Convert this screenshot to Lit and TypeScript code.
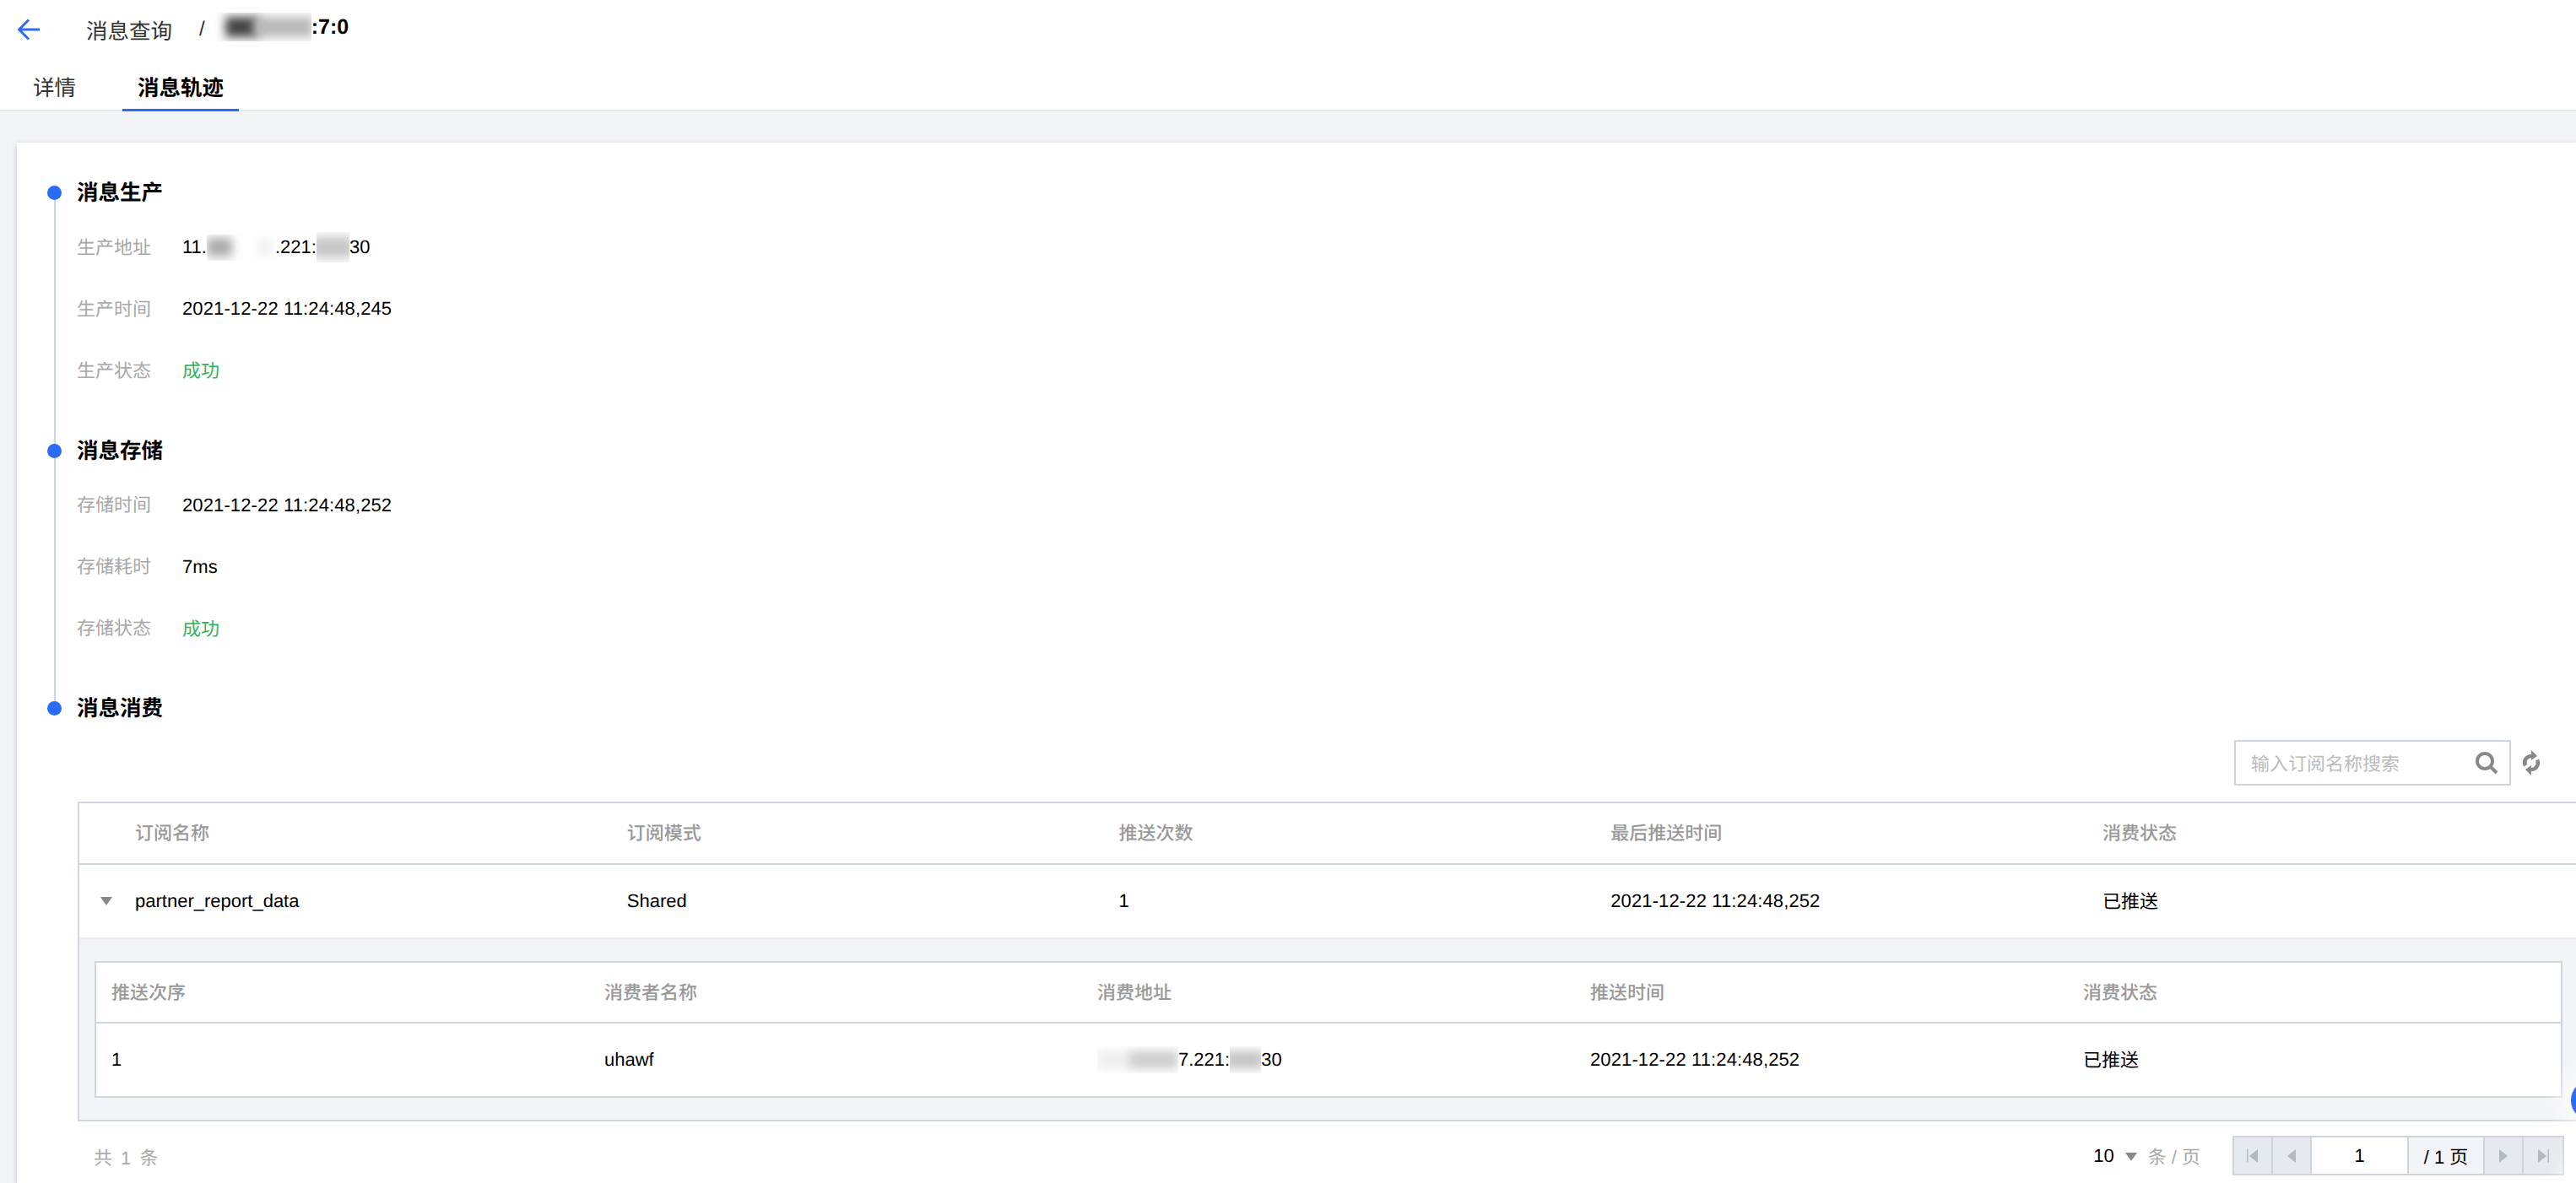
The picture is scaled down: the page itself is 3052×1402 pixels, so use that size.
import { LitElement, html, css, svg } from 'lit';
import { customElement } from 'lit/decorators.js';

type Blob = [left: number, width: number, color: string];

const HEAD_COLS = ['订阅名称', '订阅模式', '推送次数', '最后推送时间', '消费状态'];
const SUB_COLS = ['推送次序', '消费者名称', '消费地址', '推送时间', '消费状态'];

// redaction: soft grey blobs clipped to a white box
function redact(width: number, height: number, blobs: Blob[]) {
  return html`<span class="redact" style="width:${width}px;height:${height}px">
    ${blobs.map(([left, w, color]) => html`<i style="left:${left}px;width:${w}px;background:${color}"></i>`)}
  </span>`;
}

const caret = html`<svg class="caret" viewBox="0 0 14 10" width="14" height="10"><path d="M0 0H14L7 10Z" fill="#888"></path></svg>`;

function pagerIcon(kind: 'first' | 'prev' | 'next' | 'last') {
  const shapes = {
    first: svg`<path d="M1 1h1.5v16H1zM14 1v16L4 9z"></path>`,
    prev: svg`<path d="M13 1v16L3 9z"></path>`,
    next: svg`<path d="M3 1v16l10-8z"></path>`,
    last: svg`<path d="M13.5 1H15v16h-1.5zM2 1v16l10-8z"></path>`,
  };
  return html`<svg viewBox="0 0 16 18" width="16" height="18" fill="#b4b8bf">${shapes[kind]}</svg>`;
}

@customElement('app-root')
export class AppRoot extends LitElement {
  static styles = css`
    :host {
      display: block;
      height: 1402px;
      overflow: hidden;
      position: relative;
      background: #f2f4f8;
      color: #000;
      font-family: "Liberation Sans", "Noto Sans CJK SC", sans-serif;
      font-size: 22px;
      text-rendering: geometricPrecision;
    }

    .header {
      height: 132px;
      box-sizing: border-box;
      background: #fff;
      border-bottom: 2px solid #e6e9ef;
    }

    .crumbs {
      height: 70px;
      display: flex;
      align-items: center;
      padding-left: 21px;
    }

    .crumb-link {
      margin-left: 55px;
      font-size: 25.5px;
      color: #333;
    }

    .crumb-sep {
      margin-left: 32px;
      font-size: 24px;
      color: #333;
    }

    .crumb-current {
      display: flex;
      align-items: center;
      margin-left: 10px;
      font-size: 25px;
      font-weight: bold;
      margin-top: -6px;
    }

    .tabs {
      display: flex;
      gap: 37px;
      height: 62px;
      padding-left: 21px;
    }

    .tab {
      height: 62px;
      box-sizing: border-box;
      padding: 17px 18px 0;
      font-size: 25.5px;
      line-height: 36px;
      color: #333;
    }

    .tab.active {
      font-weight: bold;
      color: #000;
      border-bottom: 3px solid #2a6cf6;
    }

    .card {
      margin: 37px 0 0 20px;
      height: 1233px;
      box-sizing: border-box;
      padding: 31px 0 0 0;
      background: #fff;
      box-shadow: 0 2px 6px rgba(54, 58, 80, 0.28);
    }

    .step {
      display: flex;
    }

    .gutter {
      width: 71px;
      flex: none;
      display: flex;
      flex-direction: column;
      align-items: center;
      padding-left: 18px;
      box-sizing: border-box;
    }

    .gutter-pad {
      height: 20px;
      width: 2px;
    }

    .gutter-pad.linked {
      background: #cfd5e0;
    }

    .dot {
      width: 17px;
      height: 17px;
      border-radius: 50%;
      background: #2a6cf6;
      flex: none;
    }

    .line {
      flex: 1;
      width: 2px;
      background: #cfd5e0;
    }

    .body {
      flex: 1;
      min-width: 0;
    }

    .body.spaced {
      padding-bottom: 30.5px;
    }

    .step-title {
      height: 56px;
      line-height: 59px;
      font-size: 25.5px;
      font-weight: bold;
    }

    .field {
      display: flex;
      align-items: center;
      height: 73px;
    }

    .field-label {
      width: 125px;
      color: #a8a8a8;
      margin-top: -2px;
    }

    .field-value {
      display: flex;
      align-items: center;
      margin-top: 1px;
    }

    .field-value.ok {
      margin-top: -1px;
      color: #34b35a;
    }

    .time {
      letter-spacing: 0.12px;
    }

    .redact {
      display: inline-block;
      position: relative;
      overflow: hidden;
      background: #fff;
      flex: none;
    }

    .redact i {
      position: absolute;
      top: 15%;
      bottom: 15%;
      filter: blur(6px);
    }

    .toolbar {
      display: flex;
      align-items: center;
      justify-content: flex-end;
      gap: 12px;
      margin: 10px 0 19px;
      padding-right: 41px;
      height: 54px;
    }

    .search {
      width: 328px;
      height: 54px;
      box-sizing: border-box;
      border: 2px solid #d0d6e0;
      display: flex;
      align-items: center;
      justify-content: space-between;
      padding: 0 13px 0 18px;
      color: #bbb;
    }

    .table {
      margin-left: 72px;
      border-left: 2px solid #d0d6e0;
      border-top: 2px solid #d0d6e0;
      border-bottom: 2px solid #d0d6e0;
    }

    .grid {
      display: grid;
      grid-template-columns: 66px repeat(5, 582.75px);
      align-items: center;
    }

    .thead {
      height: 71px;
      border-bottom: 2px solid #d0d6e0;
      color: #999;
      font-weight: 500;
    }

    .trow {
      height: 86px;
      border-bottom: 2px solid #e8ebf0;
    }

    .cjk {
      margin-top: -3px;
    }

    .caret {
      margin-left: 25px;
    }

    .panel {
      background: #f2f4f8;
      padding: 26px 16px 26px 18px;
    }

    .sub {
      background: #fff;
      border: 2px solid #d0d6e0;
    }

    .subgrid {
      display: grid;
      grid-template-columns: repeat(5, 584px);
      padding-left: 18px;
      align-items: center;
    }

    .sub .thead {
      height: 70px;
    }

    .sub .trow {
      height: 86px;
      border-bottom: none;
    }

    .cell-flex {
      display: flex;
      align-items: center;
    }

    .footer {
      display: flex;
      align-items: center;
      margin: 17px 0 0 72px;
      height: 47px;
      padding: 0 14px 0 19px;
    }

    .total {
      color: #aaa;
      word-spacing: 2px;
      letter-spacing: 1px;
      margin-top: 3px;
    }

    .page-size {
      margin-left: auto;
      display: flex;
      align-items: center;
      margin-right: 38px;
    }

    .page-size .caret {
      margin: 2px 13px 0 13px;
    }

    .page-unit {
      color: #aaa;
    }

    .pager {
      display: flex;
      height: 47px;
      box-sizing: border-box;
      border: 2px solid #cfd4dc;
      background: #e6e9ef;
    }

    .pager > * {
      display: flex;
      align-items: center;
      justify-content: center;
      box-sizing: border-box;
      border-right: 2px solid #cfd4dc;
    }

    .pager > *:last-child {
      border-right: none;
    }

    .pg-btn {
      width: 46px;
    }

    .pg-input {
      width: 115px;
      background: #fff;
    }

    .pg-total {
      width: 90px;
      background: #f2f4f8;
    }

    .float-btn {
      position: absolute;
      left: 3046px;
      top: 1280px;
      width: 48px;
      height: 48px;
      border-radius: 50%;
      background: #2a6cf6;
      box-shadow: 0 0 30px 14px rgba(255, 255, 255, 0.7);
    }

    .float-btn.ghost {
      top: 1380px;
      background: #fff;
    }
  `;

  render() {
    return html`
      <div class="header">
        <div class="crumbs">
          <svg width="26" height="26" viewBox="0 0 26 26" fill="none" stroke="#2a6cf6" stroke-width="3">
            <path d="M1.5 13H26M13 1.5L1.5 13L13 24.5"></path>
          </svg>
          <span class="crumb-link">消息查询</span>
          <span class="crumb-sep">/</span>
          <span class="crumb-current">
            ${redact(116, 34, [[14, 40, '#444'], [48, 70, '#b9b9b9']])}:7:0
          </span>
        </div>
        <div class="tabs">
          <div class="tab">详情</div>
          <div class="tab active">消息轨迹</div>
        </div>
      </div>

      <div class="card">
        <div class="step">
          ${this.renderGutter(false, true)}
          <div class="body spaced">
            <div class="step-title">消息生产</div>
            <div class="field">
              <span class="field-label">生产地址</span>
              <span class="field-value">11.${redact(81, 31, [[0, 30, '#aaa'], [62, 14, '#eee']])}.221:${redact(39, 36, [[-6, 50, '#c8c8c8']])}30</span>
            </div>
            ${this.renderField('生产时间', '2021-12-22 11:24:48,245')}
            ${this.renderField('生产状态', '成功', true)}
          </div>
        </div>

        <div class="step">
          ${this.renderGutter(true, true)}
          <div class="body spaced">
            <div class="step-title">消息存储</div>
            ${this.renderField('存储时间', '2021-12-22 11:24:48,252')}
            ${this.renderField('存储耗时', '7ms')}
            ${this.renderField('存储状态', '成功', true)}
          </div>
        </div>

        <div class="step">
          ${this.renderGutter(true, false)}
          <div class="body">
            <div class="step-title">消息消费</div>
          </div>
        </div>

        <div class="toolbar">
          <div class="search">
            <span>输入订阅名称搜索</span>
            <svg width="28" height="28" viewBox="0 0 28 28" fill="none" stroke="#888" stroke-width="4">
              <circle cx="12" cy="12" r="9"></circle>
              <path d="M18.5 18.5L26 26"></path>
            </svg>
          </div>
          <svg width="24" height="30" viewBox="0 0 24 30" fill="#888">
            <path d="M3 19.5A10 10 0 0 1 13 5V9A6 6 0 0 0 7 17.5Z"></path>
            <path d="M12 0L19 7L12 12Z"></path>
            <path d="M21 10.5A10 10 0 0 1 11 25V21A6 6 0 0 0 17 12.5Z"></path>
            <path d="M12 30L5 23L12 18Z"></path>
          </svg>
        </div>

        <div class="table">
          <div class="grid thead">
            <span></span>
            ${HEAD_COLS.map((c) => html`<span class="cjk">${c}</span>`)}
          </div>
          <div class="grid trow">
            ${caret}
            <span>partner_report_data</span>
            <span>Shared</span>
            <span>1</span>
            <span class="time">2021-12-22 11:24:48,252</span>
            <span class="cjk">已推送</span>
          </div>
          <div class="panel">
            <div class="sub">
              <div class="subgrid thead">
                ${SUB_COLS.map((c) => html`<span class="cjk">${c}</span>`)}
              </div>
              <div class="subgrid trow">
                <span>1</span>
                <span>uhawf</span>
                <span class="cell-flex">${redact(96, 32, [[0, 34, '#eee'], [36, 60, '#cfcfcf']])}7.221:${redact(37, 32, [[-6, 46, '#c6c6c6']])}30</span>
                <span class="time">2021-12-22 11:24:48,252</span>
                <span class="cjk">已推送</span>
              </div>
            </div>
          </div>
        </div>

        <div class="footer">
          <span class="total">共 1 条</span>
          <div class="page-size">
            <span>10</span>
            ${caret}
            <span class="page-unit">条 / 页</span>
          </div>
          <div class="pager">
            <span class="pg-btn">${pagerIcon('first')}</span>
            <span class="pg-btn">${pagerIcon('prev')}</span>
            <span class="pg-input">1</span>
            <span class="pg-total">/ 1 页</span>
            <span class="pg-btn">${pagerIcon('next')}</span>
            <span class="pg-btn">${pagerIcon('last')}</span>
          </div>
        </div>
      </div>

      <div class="float-btn"></div>
      <div class="float-btn ghost"></div>
    `;
  }

  renderGutter(linkedAbove: boolean, linkedBelow: boolean) {
    return html`
      <div class="gutter">
        <div class="gutter-pad ${linkedAbove ? 'linked' : ''}"></div>
        <div class="dot"></div>
        ${linkedBelow ? html`<div class="line"></div>` : ''}
      </div>
    `;
  }

  renderField(label: string, value: string, ok = false) {
    return html`
      <div class="field">
        <span class="field-label">${label}</span>
        <span class="field-value time ${ok ? 'ok' : ''}">${value}</span>
      </div>
    `;
  }
}
